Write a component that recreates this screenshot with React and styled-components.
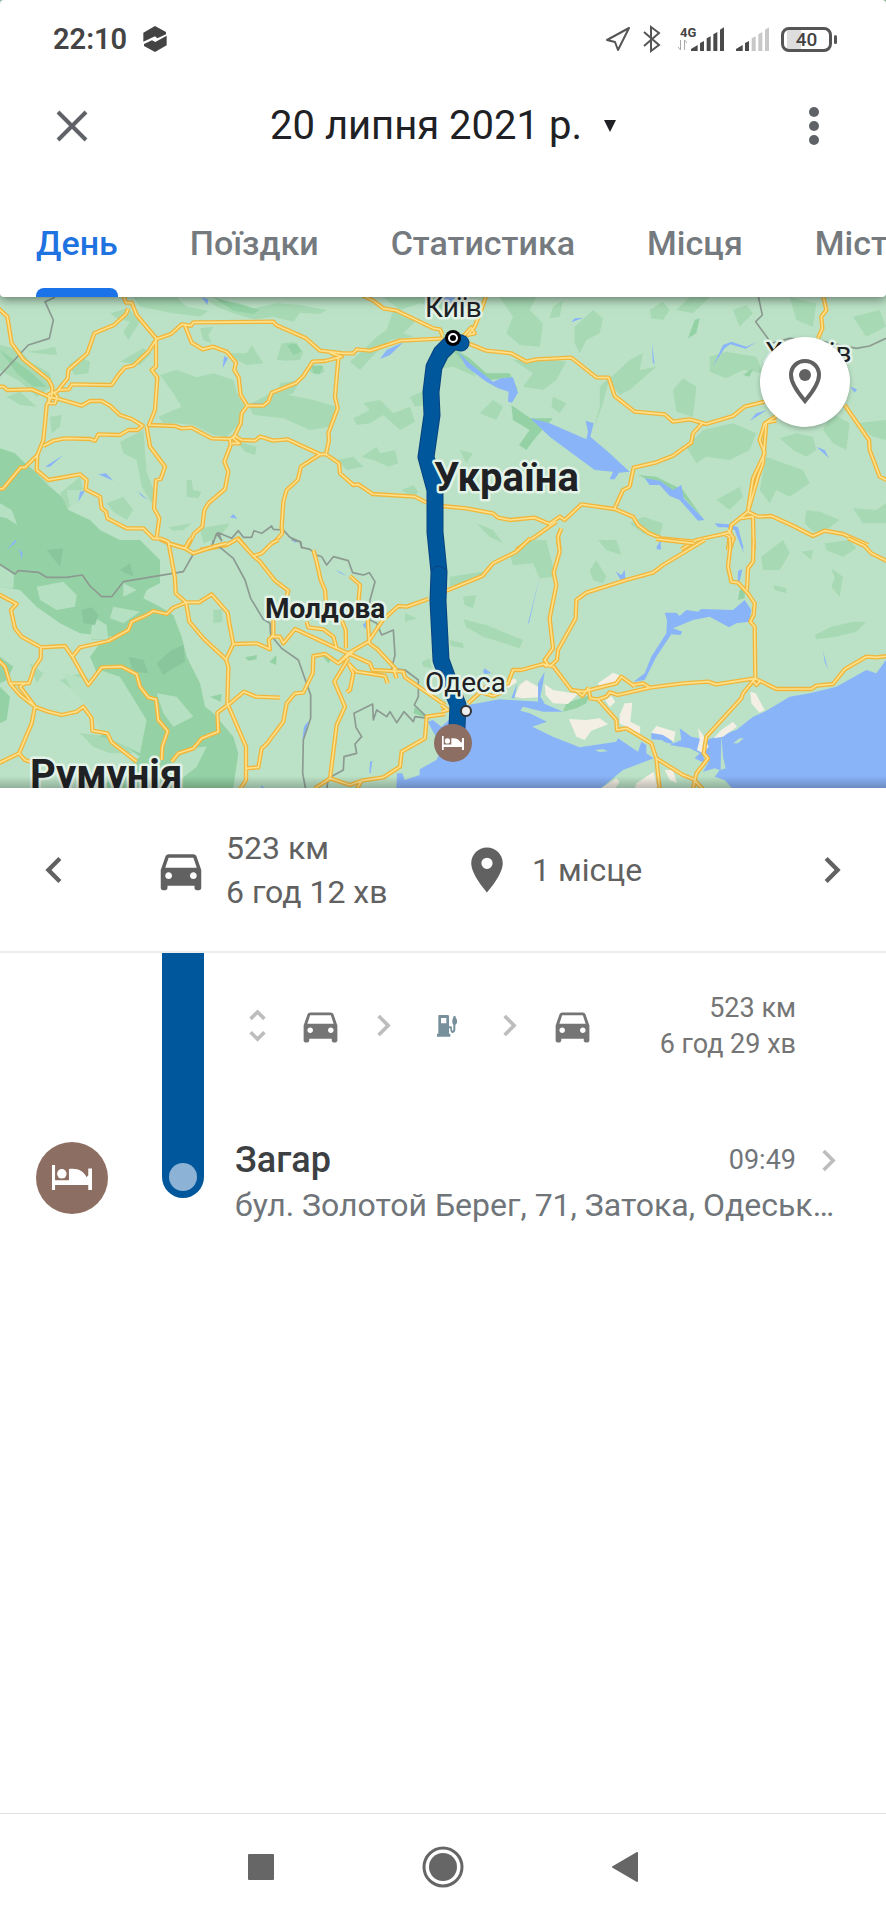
import styled, { createGlobalStyle, css } from 'styled-components'
import {
    MdDirectionsCar,
    MdPlace,
    MdChevronLeft,
    MdChevronRight,
    MdUnfoldMore,
} from 'react-icons/md'

const GlobalStyle = createGlobalStyle`
    * {
        box-sizing: border-box;
    }

    body {
        margin: 0;
        background: #fff;
        font-family: Roboto, "Noto Sans", sans-serif;
        color: #5f6368;
    }

    button {
        padding: 0;
        border: none;
        background: none;
        color: inherit;
        font: inherit;
        cursor: pointer;
    }

    svg {
        display: block;
        flex: none;
    }
`;

const Screen = styled.div`
    min-height: 100vh;
    display: flex;
    flex-direction: column;
    overflow-x: hidden;
`;

const Header = styled.header`
    position: relative;
    z-index: 1;
    background: #8fb59a;
    box-shadow: 0 2px 10px rgba(0, 0, 0, 0.5);
`;

const HeaderSheet = styled.div`
    background: #fff;
    border-radius: 4px;
`;

const StatusBar = styled.div`
    height: 78px;
    padding: 0 49px 0 53px;
    display: flex;
    align-items: center;
    justify-content: space-between;
    color: #444;
`;

const StatusGroup = styled.div`
    display: flex;
    align-items: center;
    gap: ${({ $gap }) => $gap}px;
`;

const Clock = styled.time`
    font-size: 29px;
    font-weight: 600;
    line-height: 36px;
`;

const Network = styled.div`
    display: flex;
    align-items: flex-end;
    margin-left: 4px;
`;

const NetworkType = styled.div`
    width: 20px;
    margin-right: -6px;
    display: flex;
    flex-direction: column;
    font-size: 13px;
    font-weight: 700;
    line-height: 12px;

    span {
        padding-left: 3px;
    }
`;

const Battery = styled.div`
    display: flex;
    align-items: center;
`;

const BatteryBody = styled.div`
    width: 51px;
    height: 25px;
    border: 3px solid #555;
    border-radius: 8px;
    background: linear-gradient(to right, #fff 3px, #ddd 3px, #ddd 17px, #fff 17px);
    font-size: 19px;
    font-weight: 500;
    line-height: 20px;
    text-align: center;
`;

const BatteryTip = styled.div`
    width: 3px;
    height: 9px;
    margin-left: 2px;
    border-radius: 2px;
    background: #555;
`;

const Toolbar = styled.div`
    height: 96px;
    display: grid;
    grid-template-columns: 144px 1fr 144px;
    align-items: center;
    justify-items: center;
`;

const DateButton = styled.button`
    display: flex;
    align-items: center;
    gap: 22px;
    color: #202124;
    font-size: 40px;
    line-height: 48px;
    white-space: nowrap;
`;

const Tabs = styled.nav`
    height: 123px;
    padding-left: 36px;
    display: flex;
    gap: 72px;
    overflow: hidden;
`;

const Tab = styled.button`
    flex: none;
    padding-top: 23px;
    border-bottom: 9px solid transparent;
    font-size: 34px;
    font-weight: 500;
    line-height: 40px;
    color: #757a7f;
    position: relative;

    ${({ $active }) => $active && css`
        color: #1f73e0;

        &::after {
            content: "";
            position: absolute;
            left: 0;
            right: 0;
            bottom: -9px;
            height: 9px;
            border-radius: 8px 8px 0 0;
            background: #1a73e8;
        }
    `}
`;

const MapArea = styled.section`
    position: relative;
    height: 491px;
    overflow: hidden;
    background: #bbe2c6;

    &::after {
        content: "";
        position: absolute;
        left: 0;
        right: 0;
        bottom: 0;
        height: 12px;
        background: linear-gradient(to bottom, transparent, rgba(0, 0, 0, 0.22));
    }
`;

const PlacesButton = styled.button`
    position: absolute;
    top: 40px;
    right: 36px;
    width: 90px;
    height: 90px;
    display: grid;
    place-items: center;
    border-radius: 50%;
    background: #fff;
    color: #616161;
    box-shadow: 0 2px 5px rgba(0, 0, 0, 0.25);
`;

const Summary = styled.section`
    height: 165px;
    display: grid;
    grid-template-columns: 108px 1fr 108px;
    align-items: center;
    border-bottom: 2px solid #ededed;
    color: #616161;
`;

const StepButton = styled.button`
    height: 100%;
    display: grid;
    place-items: center;
`;

const Stats = styled.div`
    padding: 0 12px 0 46px;
    display: grid;
    grid-template-columns: 1fr 1fr;
`;

const Stat = styled.div`
    display: flex;
    align-items: center;
    gap: 18px;
    font-size: 32px;
    line-height: 44px;
    white-space: nowrap;
`;

const Timeline = styled.main`
    flex: 1;
    display: grid;
    grid-template-columns: 162px 42px 1fr;
    grid-template-rows: 145px auto;
    align-content: start;
`;

const Rail = styled.div`
    grid-column: 2;
    grid-row: 1 / 3;
    margin-bottom: 29px;
    padding-bottom: 7px;
    display: flex;
    align-items: flex-end;
    justify-content: center;
    border-radius: 0 0 21px 21px;
    background: #01579b;
`;

const RailDot = styled.div`
    width: 28px;
    height: 28px;
    border-radius: 50%;
    background: #8cb3d5;
`;

const Segment = styled.div`
    grid-column: 3;
    grid-row: 1;
    padding: 0 90px 0 22px;
    display: flex;
    align-items: center;
    justify-content: space-between;
    color: #757575;
`;

const SegmentSteps = styled.button`
    display: grid;
    grid-template-columns: repeat(6, 63px);
    align-items: center;
    justify-items: center;
`;

const SegmentInfo = styled.div`
    font-size: 27px;
    line-height: 36px;
    text-align: right;
    white-space: nowrap;
`;

const PlaceBadge = styled.div`
    grid-column: 1;
    grid-row: 2;
    width: 72px;
    height: 72px;
    margin: 44px 0 0 36px;
    display: grid;
    place-items: center;
    border-radius: 50%;
    background: #8d6e63;
`;

const Place = styled.a`
    grid-column: 3;
    grid-row: 2;
    min-width: 0;
    padding: 39px 46px 0 31px;
    color: #70757a;
    text-decoration: none;
`;

const PlaceTop = styled.div`
    display: flex;
    align-items: center;
    margin-right: -10px;
`;

const PlaceName = styled.h2`
    margin: 0;
    flex: 1;
    color: #3c4043;
    font-size: 36px;
    font-weight: 500;
    line-height: 46px;
`;

const PlaceTime = styled.time`
    margin-right: 11px;
    font-size: 27px;
    line-height: 36px;
`;

const PlaceAddress = styled.p`
    margin: 0;
    font-size: 32px;
    line-height: 44px;
    white-space: nowrap;
    overflow: hidden;
`;

const NavBar = styled.nav`
    height: 107px;
    display: flex;
    justify-content: center;
    border-top: 1px solid #e2e2e2;
    color: #666;
`;

const NavButton = styled.button`
    width: 182px;
    display: grid;
    place-items: center;
`;

const MapLabel = styled.text`
    font-family: Roboto, "Noto Sans", sans-serif;
    font-size: ${({ $size }) => $size}px;
    font-weight: ${({ $bold }) => ($bold ? 700 : 400)};
    fill: #202124;
    stroke: #e4f3e8;
    stroke-width: 5px;
    stroke-linejoin: round;
    paint-order: stroke;
`;

// the country is drawn in four sheets, 1329 units wide each, 750 apart vertically
const sheets = [
    {
        x: 0,
        y: 0,
        woods: [
            'M400 22L420 50L520 70L600 80L625 62L560 50L530 22Z',
            'M625 30L720 40L760 55L830 40L900 45L980 60L960 72L900 68L880 95L820 80L760 88L700 70L650 50Z',
            'M1150 22L1329 22L1329 60L1260 40L1200 60Z',
            'M1180 60L1250 90L1210 130L1240 140L1170 150L1130 185L1080 240L1050 215L1090 180L1130 140L1160 120Z',
            'M0 165L60 180L90 215L150 250L155 290L110 320L60 275L0 240Z',
            'M80 185L120 180L165 170L172 195L110 190Z',
            'M205 225L240 200L270 215L265 250L225 255Z',
            'M360 215L430 175L455 190L420 225Z',
            'M330 70L385 55L420 95L385 150L370 125L390 95L350 85Z',
            'M600 115L640 110L625 135L635 160L610 150Z',
            'M830 210L845 160L880 155L910 185L900 210L860 212Z',
            'M690 190L740 190L755 165L790 220L740 225L700 205Z',
            'M480 255L530 240L590 262L640 250L700 270L715 320L735 350L720 400L680 440L640 435L580 405L530 400L490 400L475 380L545 350L520 310Z',
            'M745 345L820 305L940 330L1010 350L990 410L930 420L850 385L760 375Z',
            'M930 225L965 225L975 245L950 255L930 245Z',
            'M1060 385L1110 360L1090 340L1140 330L1180 370L1230 350L1245 395L1200 420L1150 375L1110 400L1070 405Z',
            'M1085 500L1130 470L1140 490L1185 480L1195 520L1165 530L1120 510Z',
            'M1205 600L1240 585L1255 605L1240 625Z',
            'M1230 320L1280 300L1275 345L1245 350Z',
            'M360 455L430 420L440 545L465 610L455 640L425 590L410 510L370 490Z',
            'M20 320L60 305L110 350L60 345Z',
            'M150 380L185 375L180 410L155 430Z',
            'M560 570L575 570L580 600L605 605L595 625L560 620Z',
            'M180 610L240 560L250 600L200 660Z',
            'M320 640L370 620L400 660L380 690L340 665Z',
            'M505 712L575 700L550 720L520 722Z',
            'M840 280L900 270L880 310L830 325Z',
            'M1010 510L1060 500L1090 530L1040 540Z',
            'M600 715L690 700L660 740L610 760Z',
            'M710 455L770 470L765 495L735 485Z',
        ],
        forest: [
            'M0 475L45 490L75 520L100 540L150 590L185 620L205 660L270 690L300 720L360 750L410 780L0 780Z',
            'M640 22L780 60L760 72L700 62Z',
            'M860 165L890 160L905 185L880 195Z',
            'M935 228L970 228L960 252L940 248Z',
            'M0 180L50 215L90 245L140 290L100 290L50 250Z',
        ],
        clear: [
            'M0 640L35 660L52 705L20 685L0 680Z',
            'M200 600L255 600L235 640L210 650Z',
        ],
        water: [
            'M135 530L190 495L150 530Z',
            'M295 553L318 550L340 572Z',
            'M235 635L240 605L255 602Z',
            'M412 602L445 630L425 618Z',
            'M668 235L672 198L684 205Z',
            'M1140 207L1160 180L1210 157L1170 195Z',
            'M690 682L700 672L712 686Z',
            'M605 22L625 28L622 45Z',
            'M755 340L790 340L770 346Z',
            'M865 740L895 755L885 758Z',
        ],
        sand: [],
        roads: [
            'M-5 55L22 80L35 160L70 208L145 268L157 290L155 320L140 345L135 400L130 450L112 495L110 540L145 570L240 553L260 570L257 598L300 620L305 655L318 665L322 685L380 715L430 715L460 745L475 745L505 760L560 775',
            'M-5 290L10 290L22 300L95 298L150 322L170 325L245 347L270 333L305 333L330 347L360 375L395 387L428 407L412 420L385 420L360 435L295 433L285 452L270 447L195 445L160 452L130 468',
            'M370 15L378 38L395 38L410 75L470 147L513 132L545 103L573 107L580 97L820 95L828 105L918 145L960 182L1030 190L1060 190L1070 178L1110 182L1200 152L1335 145',
            'M385 55L378 72L342 105L283 130L262 190L205 240L203 265L170 305L147 312L147 340L165 340L172 320L160 305',
            'M470 147L445 185L400 227L375 232L355 255L335 285L215 283L207 298L175 300',
            'M468 147L468 230L455 240L472 262L465 360L447 405L525 408L545 415L575 413L635 445L690 447L705 438L725 450L765 452L780 440L820 452L862 448L960 493L978 493L1017 520L1020 550L1060 585L1075 583L1118 612L1245 620L1280 638',
            'M555 107L575 158L608 178L640 170L680 185L708 218L703 240L716 262L722 315L742 347L790 347L805 335L815 308L887 280L910 258L938 215L975 213L1025 200L990 188',
            'M742 347L725 370L722 400L700 445L718 460L695 460',
            'M1085 15L1120 32L1150 55L1190 62L1300 115L1320 118L1329 140',
            'M112 495L75 532L62 532L10 595L-5 598',
            'M440 410L450 470L495 530L482 567L468 570L462 655L478 685L470 742',
            'M690 447L692 465L673 515L685 545L675 597L625 640L613 660L607 710L583 730L560 775',
            'M1015 205L1005 320L1013 355L985 430L987 450L978 493',
            'M960 493L903 530L893 570L860 600L850 635L845 710L847 730L825 755L815 760',
            'M600 780L680 765L715 745L740 775',
        ],
        borders: [
            'M165 22L135 35L160 90L148 145L85 165L-5 262',
            'M635 772L650 730L665 752L655 728L695 745L715 722L730 742L755 742L762 722L785 730L815 708L820 718L850 720L870 742L903 757L905 775',
        ],
    },
    {
        x: 1329,
        y: 0,
        woods: [
            'M170 22L280 22L260 60L300 100L290 170L230 165L190 130L210 80Z',
            'M330 50L360 30L350 80L320 85Z',
            'M210 210L290 205L370 215L340 270L300 300L240 290L270 250Z',
            'M395 110L450 60L480 85L470 130L430 150L410 190L395 160Z',
            'M620 60L660 35L680 60L660 90L625 85Z',
            'M700 60L740 22L800 22L750 70Z',
            'M870 60L910 45L930 70L890 110Z',
            'M800 200L850 185L940 200L960 250L900 240L850 265L800 245Z',
            'M495 270L560 210L600 190L590 240L640 230L560 300L530 315Z',
            'M690 300L720 265L760 290L750 380L700 365Z',
            'M730 470L780 420L870 400L940 430L920 480L860 510L790 500L760 520Z',
            'M1010 445L1060 430L1110 440L1120 480L1090 500L1050 480Z',
            'M970 500L1010 515L1080 540L1100 580L1040 620L1000 600L980 640L950 600Z',
            'M1165 370L1220 400L1210 480L1170 460L1140 420Z',
            'M1090 660L1130 665L1190 690L1150 720L1110 725L1085 700Z',
            'M1230 655L1300 660L1329 640L1329 700L1260 700Z',
            'M1240 400L1329 390L1329 450L1290 440Z',
            'M470 290L500 262L480 340L450 420L470 350Z',
            'M110 370L150 330L180 350L160 390Z',
            'M330 320L370 340L350 370L325 350Z',
            'M560 700L600 680L660 700L650 740L600 730Z',
            'M820 630L890 590L900 620L860 660Z',
            'M50 480L90 490L70 520Z',
            'M100 700L150 720L180 760L140 740Z',
            'M0 130L50 190L100 260L30 230L0 235Z',
            'M1040 22L1120 40L1110 110L1060 90Z',
            'M1230 80L1310 60L1329 110L1270 140Z',
        ],
        forest: [
            'M735 145L755 90L770 85L760 130Z',
            'M900 255L930 235L920 260Z',
            'M205 345L262 385L330 385L280 440L250 480L228 465L260 420L210 390Z',
            'M0 150L40 180L80 205L130 250L200 250L225 300L190 265L140 270L70 225Z',
            'M585 555L640 560L720 600L780 685L720 620L660 590Z',
        ],
        water: [
            'M45 185L75 215L150 275L175 265L210 262L225 308L207 338L195 335L197 305L165 295L130 275L70 230Z',
            'M262 385L320 400L430 448L435 425L428 392L452 400L442 440L500 490L560 545L528 548L515 568L500 568L510 545L455 540L320 440Z',
            'M605 565L650 572L690 600L715 585L722 625L785 690L765 692L710 630L680 618L650 585L620 585Z',
            'M815 700L860 703L885 712L902 775L896 775L875 720L850 712L825 712Z',
            'M385 97L395 85L422 83Z',
            'M627 160L635 225L629 215Z',
            'M810 228L840 165L865 155L910 170L942 155L908 176L862 163L845 175Z',
            'M1120 470L1145 480L1158 505Z',
            'M920 393L940 370L972 360Z',
            'M640 778L650 755L655 778Z',
            'M0 22L35 22L20 60Z',
            'M1222 290L1242 298L1235 308Z',
        ],
        sand: [],
        roads: [
            'M130 15L115 60L95 110L75 135L95 130L85 112L60 140L0 150',
            'M75 160L130 182L205 190L250 215L280 208L385 203L460 262L497 263L515 318L575 365L665 373L690 395L740 388L790 402L870 378L905 350L965 335',
            'M780 397L750 430L745 458L690 497L640 517L572 533L560 590L540 600L515 655',
            'M-5 648L70 655L150 670L165 683L200 690L275 683L320 702L350 680L365 690L415 643L515 657L570 680L585 705L615 728L655 745L755 755',
            'M340 695L220 780',
            'M355 715L345 740L350 780',
            'M1140 15L1150 60L1135 80L1138 115L1125 145',
            'M1205 345L1278 450L1280 480L1310 560L1335 572',
            'M1005 375L965 400L950 450L965 490L930 565L915 660',
            'M1000 392L970 397L960 520L945 560L915 665',
            'M715 778L760 750L860 728L865 705L915 665L945 680L985 678L1045 705L1110 738L1145 722L1200 732L1275 765',
            'M890 685L930 680L932 780',
            'M840 730L860 740L855 780M855 720L872 745L860 780',
        ],
        borders: [
            'M945 15L958 75L938 95L985 160L1040 145L1120 150L1240 175L1280 168L1329 145',
        ],
    },
    {
        x: 0,
        y: 750,
        woods: [
            'M110 135L190 120L230 160L300 180L380 190L440 220L370 240L330 225L290 200L240 260L180 240L130 190Z',
            'M265 255L320 250L330 300L275 300Z',
            'M180 420L240 400L300 440L230 460Z',
            'M240 580L340 590L400 640L330 640L280 620Z',
            'M640 210L665 208L668 245L640 250Z',
            'M1215 220L1250 235L1215 245Z',
            'M1265 365L1290 355L1295 385L1270 380Z',
            'M330 0L420 0L420 50L370 70L300 40Z',
            'M450 590L490 610L480 640L450 630Z',
            'M640 650L690 680L690 745L640 740Z',
            'M90 370L130 400L110 430Z',
        ],
        forest: [
            'M0 0L420 0L480 60L480 130L440 150L430 175L480 200L520 225L545 290L560 350L600 430L615 500L640 520L700 590L715 640L700 745L300 745L420 650L350 600L300 590L330 560L390 500L300 420L270 350L300 310L340 290L240 280L180 250L110 200L60 150L0 140Z',
            'M0 350L40 380L20 420L0 430Z',
            'M0 440L30 470L20 540L0 550Z',
            'M735 352L770 345L770 358L745 362Z',
            'M808 365L830 345L828 375Z',
            'M630 470L665 462L662 485Z',
            'M965 345L1000 350L985 370Z',
            'M1245 500L1285 535L1240 520Z',
        ],
        clear: [
            'M0 72L42 105L40 145L0 142Z',
            'M110 140L190 125L230 165L225 200L170 210L120 180Z',
            'M280 230L320 255L325 300L270 295Z',
            'M340 200L420 215L370 250L330 235Z',
            'M300 390L360 410L440 540L420 640L340 600L300 570L270 500L220 460L190 400L270 420Z',
            'M470 460L530 470L580 530L520 560L490 520Z',
            'M370 130L410 150L370 170Z',
            'M560 625L620 620L590 680L540 720L500 690Z',
        ],
        peaks: [
            'M245 210L275 202L295 225L285 255L250 250Z',
            'M385 350L430 360L445 400L400 395Z',
            'M470 370L515 330L550 315L555 365L520 385L490 405Z',
            'M140 30L190 25L180 80Z',
            'M360 90L390 70L400 110Z',
        ],
        water: [
            'M57 25L68 40L65 58Z',
            'M1005 88L1042 108L1020 100Z',
            'M1088 255L1098 245L1097 268Z',
            'M907 600L912 560L925 542L918 580Z',
            'M1108 700L1110 665L1117 662L1112 700Z',
            'M783 735L795 745L785 745Z',
            'M20 30L45 0L50 5Z',
        ],
        sand: [],
        roads: [
            'M-5 162L50 192L33 210L45 265L65 290L123 322L195 318L217 350L265 435L305 382L365 380L410 403L420 440L445 472L468 478L475 540L503 573L487 620L485 660',
            'M123 322L122 355L102 385L87 430L30 430',
            'M217 350L240 322L325 303L385 270L395 245L440 225L460 213L500 222L520 203L560 187L597 187L635 163L683 218L688 250L700 312L770 310L810 328L806 300L820 285L820 230',
            'M480 -5L505 5L525 115L527 160L558 187L568 245L610 295L678 358L685 380L682 490L738 620L738 720L720 748',
            'M505 10L555 25L580 40L640 20L680 10',
            'M555 25L572 -5M700 312L678 358',
            'M515 665L535 640L580 625L605 595L655 575L652 518L690 490L732 455L768 470L840 473',
            'M712 -5L760 48L780 65L825 122L865 152L858 175M760 48L785 40L815 10L835 0',
            'M940 30L950 65L962 120L975 150L978 190',
            'M1050 108L1080 135L1075 190M1103 230L1108 310L1132 328L1190 390',
            'M1285 177L1220 200L1195 198L1150 238L1105 305L1045 340L1015 370',
            'M815 290L840 290L850 310L885 267L1010 325L1110 370L1118 390L1210 395L1215 412L1335 495',
            'M920 245L925 262L970 268L1000 290L1010 325M1025 240L1037 270L1038 325',
            'M738 685L775 682L785 625L800 612L850 545L860 490L885 460L910 458L938 400L940 348L975 342L1015 370L1060 335',
            'M1045 355L1003 425L1035 500L1010 555L990 715L945 745',
            'M1045 370L1060 400L1050 450L1040 457M1045 370L1070 395L1155 408L1163 430M1180 385L1190 415',
            'M990 715L1050 735L1085 722L1150 712L1200 680L1205 635L1275 595L1280 530L1335 522M1085 722L1070 748',
            'M-5 360L15 380L30 430L60 465L105 500L145 515L185 525L230 515L250 500L275 535L277 572L322 580L335 607L410 665',
            'M75 430L60 440L105 500L95 550L57 640L-5 670M57 640L75 660L100 668',
        ],
        borders: [
            'M-5 70L45 102L55 92L115 97L140 112L200 112L247 105L270 138L305 170L335 170L370 125L550 95L580 42L635 22L640 0',
            'M635 20L660 22L700 55L735 120L752 175L790 238L810 250L812 285L845 325L895 360L932 465L932 535L910 600L908 700L917 748',
            'M875 -2L900 5L905 22L930 28L950 45L965 50L980 75L1000 50L1045 62L1058 98L1090 105L1108 98L1125 125L1110 180L1110 240L1130 250L1145 285L1180 270L1185 345L1175 385L1215 390L1255 420L1255 470L1243 495L1285 535L1245 530L1240 545L1212 515L1190 548L1170 515L1160 530L1130 510L1120 540L1118 492L1062 520L1068 562L1085 590L1065 612L1070 640L1032 650L1030 690L985 715L980 748',
        ],
    },
    {
        x: 1329,
        y: 750,
        woods: [
            'M200 40L240 20L270 0L310 0L325 60L340 110L290 115L270 70L210 75Z',
            'M440 90L460 60L490 110L480 130L450 120Z',
            'M465 0L520 0L535 45L490 30Z',
            'M60 170L100 165L90 205L65 195Z',
            'M62 238L130 255L190 280L240 300L230 325L170 305L120 290L70 262Z',
            'M20 300L60 310L62 325L25 318Z',
            'M955 50L1020 0L1040 40L1010 90L960 90Z',
            'M1075 35L1110 30L1105 60Z',
            'M1145 10L1220 0L1240 25L1200 50L1150 30Z',
            'M1165 85L1200 110L1190 170L1165 140L1175 115Z',
            'M1115 285L1165 260L1230 245L1270 245L1240 275L1180 290L1120 298Z',
            'M990 135L1030 145L1030 160L995 150Z',
            'M20 110L120 95L110 120L20 140Z',
        ],
        forest: [
            'M360 515L370 490L440 465L430 490L400 505Z',
            'M885 180L890 150L905 140L905 175Z',
        ],
        water: [
            'M-140 748L-138 700L-122 700L-115 720L-70 705L-70 688L-20 660L0 620L-30 575L-45 545L-30 540L-5 560L40 520L75 495L170 478L290 485L360 515L300 515L240 500L232 512L260 520L312 545L268 560L330 590L410 622L520 605L525 595L585 635L595 605L610 615L610 640L632 655L540 690L470 748Z',
            'M870 748L845 720L815 710L830 690L815 685L780 695L800 660L780 640L785 670L755 655L770 640L740 625L680 615L715 600L710 565L745 590L790 600L835 585L880 570L930 530L965 515L1040 470L1100 460L1180 440L1270 390L1300 400L1329 360L1335 748Z',
            'M665 218L700 218L710 228L730 210L765 215L775 207L870 210L905 180L925 210L918 245L880 250L858 262L800 230L750 240L690 265L718 275L712 285L685 283L640 350L605 420L572 425L605 400L625 350L670 280L672 240Z',
            'M285 430L305 395L300 430L292 470L305 490L285 490Z',
            'M205 475L222 430L215 475Z',
            'M625 580L670 580L692 612L670 608L655 600L625 598Z',
            'M255 250L290 110L258 250Z',
            'M518 95L535 105L545 90L548 122L535 122Z',
            'M884 125L885 92L898 88L890 125Z',
            'M640 22L655 0L650 30Z',
            'M120 395L125 385L145 400L125 402Z',
            'M1140 332L1155 388L1145 365Z',
            'M895 0L902 38L898 30Z',
        ],
        sand: [
            'M215 470L230 435L250 420L285 440L285 472L240 475Z',
            'M305 432L330 450L405 462L375 492L330 490L308 465Z',
            'M465 430L510 398L545 412L520 435L470 440Z',
            'M378 537L430 540L470 535L495 553L445 572L425 600L400 590Z',
            'M530 525L545 490L568 488L562 545L592 560L590 585L530 550Z',
            'M487 480L505 468L517 485L500 502Z',
            'M640 558L698 575L692 605L660 585L625 578Z',
            'M765 565L780 585L797 620L780 640L762 630L770 600Z',
            'M812 595L835 570L870 545L882 560L840 590Z',
            'M922 455L938 460L965 510L950 518L925 490Z',
            'M470 748L520 715L530 725L515 748Z',
            'M580 730L632 695L645 748L575 748Z',
            'M665 690L690 690L702 730L680 720Z',
            'M185 430L215 415L222 425L195 445Z',
        ],
        islands: [
            'M835 585L840 650L848 685L833 690Z',
            'M870 610L890 595L902 595L885 610Z',
            'M455 630L480 628L495 634L470 636Z',
        ],
        roads: [
            'M262 -5L220 35L150 70L118 108L10 152',
            'M345 -5L350 35L332 98L340 135L320 235L330 325L305 360L320 380',
            'M785 0L660 75L630 98L550 120L430 158L400 180L398 235L345 330L342 360L320 380',
            'M640 -3L752 10',
            'M860 -5L862 20L855 80L865 125L885 128L915 160L935 190L932 225L922 245L935 260L937 415',
            'M932 -5L930 65L915 85L912 150',
            'M1215 -5L1265 18L1285 40L1335 65',
            'M75 490L130 440L195 430L210 390L235 390L300 372L332 380L385 450L420 455L520 430L535 410L570 435L600 430L620 443L720 430L795 425L820 433L935 415L1000 447L1105 447L1120 437L1170 432L1205 388L1270 350L1300 352L1335 348',
            'M110 455L150 468L180 455M-5 515L15 510L-5 495',
            'M437 445L442 475L465 478L490 470L500 457L525 465L620 443M560 428L575 440',
            'M400 452L418 468L438 442',
            'M465 478L520 540L522 570L550 565L625 610L640 655L720 705L752 718L780 748',
            'M640 655L650 748M300 372L312 380',
            'M937 415L900 460L895 475L790 590L782 640L795 655L760 700L750 748',
            'M925 415L940 435L952 422',
        ],
        borders: [],
    },
];

const layers = [
    ['woods', '#a7dab4'],
    ['forest', '#94d2a5'],
    ['clear', '#b6e0c2'],
    ['peaks', '#89c69b'],
    ['water', '#8ab4f8'],
    ['sand', '#f3efe4'],
    ['islands', '#bbe2c6'],
];

function Sheet({ sheet }) {
    const roads = sheet.roads.join('');

    return (
        <g transform={`translate(${sheet.x} ${sheet.y})`}>
            {layers.map(([name, color]) => (
                <path key={name} d={(sheet[name] || []).join('')} fill={color} />
            ))}
            <g fill="none" strokeLinejoin="round">
                <path d={sheet.borders.join('')} stroke="#8c9a92" strokeWidth="5" />
                <path d={roads} stroke="#f0b63c" strokeWidth="13" />
                <path d={roads} stroke="#fde08a" strokeWidth="5" />
            </g>
        </g>
    );
}

function BedIcon({ width }) {
    return (
        <svg width={width} viewBox="0 0 118 74" fill="#fff">
            <path d="M0 0H9V45H50V12C75 8 94 18 102 36L107 30V10H118V74H107V59H9V74H0Z" />
            <circle cx="29" cy="26" r="14" />
        </svg>
    );
}

function RouteMap() {
    const route = 'M461 46L453 44L441 56L434 70L431 95L432 118L426 160L435 193L435 235L439 275L438 304L441 363L449 385L458 408L457 430L452 446';

    return (
        <svg width="100%" height="491" viewBox="0 0 886 491" preserveAspectRatio="xMidYMid slice">
            <svg width="886" height="491" viewBox="0 21 2658 1473">
                {sheets.map((sheet) => (
                    <Sheet key={`${sheet.x}-${sheet.y}`} sheet={sheet} />
                ))}
            </svg>
            <g fill="none" strokeLinejoin="round" strokeLinecap="round">
                <path d={route} stroke="#0a4480" strokeWidth="17" />
                <path d={route} stroke="#01579b" strokeWidth="15" />
                <path d="M431 273Q439 265 446 273" stroke="#0a4480" strokeWidth="1" />
            </g>
            <circle cx="453" cy="41" r="8" fill="#000" />
            <circle cx="453" cy="41" r="4" fill="#000" stroke="#fff" strokeWidth="2" />
            <MapLabel x="425" y="20" $size="28">Київ</MapLabel>
            <MapLabel x="765" y="65" $size="28">Харків</MapLabel>
            <MapLabel x="434" y="194" $size="40" $bold>Україна</MapLabel>
            <MapLabel x="265" y="321" $size="28" $bold>Молдова</MapLabel>
            <MapLabel x="425" y="395" $size="28">Одеса</MapLabel>
            <MapLabel x="30" y="491" $size="40" $bold>Румунія</MapLabel>
            <circle cx="466" cy="414" r="5" fill="#eee" stroke="#333" strokeWidth="2" />
            <circle cx="453" cy="446" r="19" fill="#8d6e63" />
            <svg x="442" y="439" width="22" height="14" viewBox="0 0 118 74">
                <BedIcon width="118" />
            </svg>
        </svg>
    );
}

function SignalBars({ level }) {
    const bars = [
        'M0 72V66L20 54V72Z',
        'M27 72V48L39 42V72Z',
        'M47 72V34L59 28V72Z',
        'M67 72V22L79 15V72Z',
        'M87 72V8L99 1V72Z',
    ];

    return (
        <svg width="33" height="24" viewBox="0 0 99 72">
            {bars.map((d, i) => (
                <path key={d} d={d} fill={i < level ? '#4a4a4a' : '#c8c8c8'} />
            ))}
        </svg>
    );
}

function ChargerIcon() {
    return (
        <svg width="20" height="22" viewBox="0 0 60 66" fill="#78909c">
            <path fillRule="evenodd" d="M6 0H32Q36 0 36 4V56H40V65H0V56H4V4Q4 0 6 0ZM12 9V25H28V9Z" />
            <path d="M36 34H41Q45 34 45 40V46Q48 48 49 44V26H55V46Q52 56 44 53Q39 50 40 40H36Z" />
            <path d="M48 10L50 3H55L57 10L60 14V24L55 29H50L46 24V14Z" />
        </svg>
    );
}

const tabs = ['День', 'Поїздки', 'Статистика', 'Місця', 'Міста'];

export default function App() {
    return (
        <Screen>
            <GlobalStyle />

            <Header>
                <HeaderSheet>
                    <StatusBar>
                        <StatusGroup $gap={16}>
                            <Clock>22:10</Clock>
                            <svg width="24" height="26" viewBox="0 0 70 78" fill="#444">
                                <path d="M35 0L68 18V25L42 37L35 31L0 47V20Z" />
                                <path d="M70 29V58L35 78L2 60V54L26 43L36 48Z" />
                            </svg>
                        </StatusGroup>
                        <StatusGroup $gap={12}>
                            <svg width="26" height="26" viewBox="0 0 26 26" fill="none" stroke="#555" strokeWidth="2" strokeLinejoin="round">
                                <path d="M24 2L2 14L10 16L13 24Z" />
                            </svg>
                            <svg width="18" height="28" viewBox="0 0 18 28" fill="none" stroke="#555" strokeWidth="2">
                                <path d="M1 7L16 20L8 26V2L16 8L1 21" />
                            </svg>
                            <Network>
                                <NetworkType>
                                    <span>4G</span>
                                    <svg width="11" height="12" viewBox="0 0 11 12" fill="none" stroke="#aaa" strokeWidth="1">
                                        <path d="M3.5 1V11L1 8M7.5 11V1L10 4" />
                                    </svg>
                                </NetworkType>
                                <SignalBars level={5} />
                            </Network>
                            <SignalBars level={2} />
                            <Battery>
                                <BatteryBody>40</BatteryBody>
                                <BatteryTip />
                            </Battery>
                        </StatusGroup>
                    </StatusBar>

                    <Toolbar>
                        <button aria-label="Закрити">
                            <svg width="32" height="32" viewBox="0 0 32 32" stroke="#5f6368" strokeWidth="4">
                                <path d="M2 2L30 30M30 2L2 30" />
                            </svg>
                        </button>
                        <DateButton>
                            20 липня 2021 р.
                            <svg width="12" height="12" viewBox="0 0 12 12" fill="#202124">
                                <path d="M0 0H12L6 12Z" />
                            </svg>
                        </DateButton>
                        <button aria-label="Більше">
                            <svg width="10" height="38" viewBox="0 0 10 38" fill="#5f6368">
                                <circle cx="5" cy="5" r="5" />
                                <circle cx="5" cy="19" r="5" />
                                <circle cx="5" cy="33" r="5" />
                            </svg>
                        </button>
                    </Toolbar>

                    <Tabs>
                        {tabs.map((tab, i) => (
                            <Tab key={tab} $active={i === 0}>{tab}</Tab>
                        ))}
                    </Tabs>
                </HeaderSheet>
            </Header>

            <MapArea>
                <RouteMap />
                <PlacesButton aria-label="Місця на карті">
                    <svg width="32" height="46" viewBox="0 0 32 46" fill="none">
                        <path d="M16 2C8 2 2 8 2 16C2 26 12 37 16 42C20 37 30 26 30 16C30 8 24 2 16 2Z" stroke="currentColor" strokeWidth="4" />
                        <circle cx="16" cy="16" r="6" fill="currentColor" />
                    </svg>
                </PlacesButton>
            </MapArea>

            <Summary>
                <StepButton aria-label="Попередній день">
                    <MdChevronLeft size={52} />
                </StepButton>
                <Stats>
                    <Stat>
                        <MdDirectionsCar size={54} />
                        <div>
                            523 км<br />
                            6 год 12 хв
                        </div>
                    </Stat>
                    <Stat>
                        <MdPlace size={54} />
                        1 місце
                    </Stat>
                </Stats>
                <StepButton aria-label="Наступний день">
                    <MdChevronRight size={52} />
                </StepButton>
            </Summary>

            <Timeline>
                <Rail>
                    <RailDot />
                </Rail>
                <Segment>
                    <SegmentSteps aria-label="Розгорнути поїздку">
                        <MdUnfoldMore size={43} color="#bdbdbd" />
                        <MdDirectionsCar size={45} />
                        <MdChevronRight size={43} color="#bdbdbd" />
                        <ChargerIcon />
                        <MdChevronRight size={43} color="#bdbdbd" />
                        <MdDirectionsCar size={45} />
                    </SegmentSteps>
                    <SegmentInfo>
                        523 км<br />
                        6 год 29 хв
                    </SegmentInfo>
                </Segment>

                <PlaceBadge>
                    <BedIcon width={40} />
                </PlaceBadge>
                <Place href="#place">
                    <PlaceTop>
                        <PlaceName>Загар</PlaceName>
                        <PlaceTime>09:49</PlaceTime>
                        <MdChevronRight size={43} color="#bdbdbd" />
                    </PlaceTop>
                    <PlaceAddress>бул. Золотой Берег, 71, Затока, Одеськ…</PlaceAddress>
                </Place>
            </Timeline>

            <NavBar>
                <NavButton aria-label="Останні">
                    <svg width="26" height="26"><rect width="26" height="26" rx="1" fill="currentColor" /></svg>
                </NavButton>
                <NavButton aria-label="Головна">
                    <svg width="42" height="42" viewBox="0 0 42 42">
                        <circle cx="21" cy="21" r="19" fill="none" stroke="currentColor" strokeWidth="3" />
                        <circle cx="21" cy="21" r="14" fill="currentColor" />
                    </svg>
                </NavButton>
                <NavButton aria-label="Назад">
                    <svg width="26" height="30" viewBox="0 0 26 30" fill="currentColor" stroke="currentColor" strokeWidth="2" strokeLinejoin="round">
                        <path d="M1 15L25 1V29Z" />
                    </svg>
                </NavButton>
            </NavBar>
        </Screen>
    );
}
